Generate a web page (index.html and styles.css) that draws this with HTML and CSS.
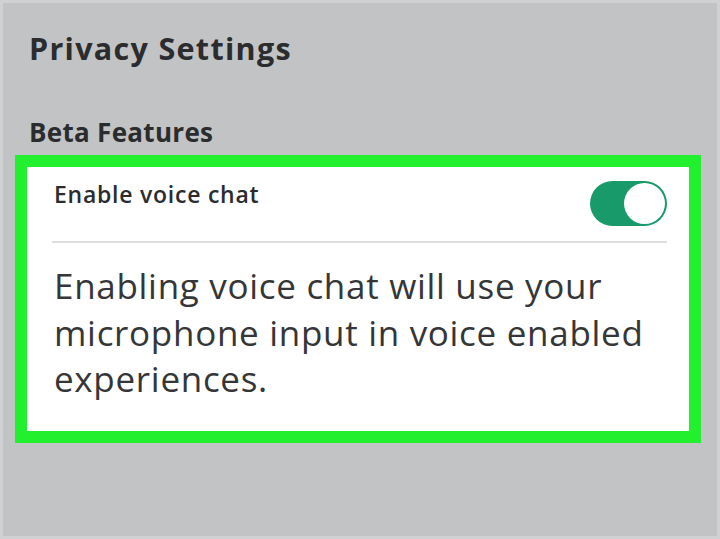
FILE: index.html
```html
<!DOCTYPE html>
<html>
<head>
<meta charset="utf-8">
<link rel="stylesheet" href="styles.css">
</head>
<body>
<div class="screen">
  <h1 class="title">Privacy Settings</h1>
  <h2 class="section">Beta Features</h2>
  <div class="highlight">
    <div class="card">
      <div class="row">
        <span class="label">Enable voice chat</span>
        <span class="toggle"><span class="knob"></span></span>
      </div>
      <div class="divider"></div>
      <p class="desc">Enabling voice chat will use your microphone input in voice enabled experiences.</p>
    </div>
  </div>
</div>
</body>
</html>
```
FILE: styles.css
```css
html, body {
  margin: 0;
  padding: 0;
}
body {
  width: 720px;
  height: 539px;
  overflow: hidden;
  background: #c2c3c5;
  font-family: "Open Sans", "Liberation Sans", sans-serif;
  color: #2b2c2e;
}
.screen {
  box-sizing: border-box;
  width: 720px;
  height: 539px;
  border: 3px solid #d0d1d3;
  padding: 25px 16px 0 12px;
}
.title {
  margin: 0 0 0 14px;
  font-size: 30.5px;
  font-weight: 700;
  line-height: 40px;
  letter-spacing: 1.3px;
}
.section {
  margin: 49px 0 0 14px;
  font-size: 26px;
  font-weight: 700;
  line-height: 30px;
  letter-spacing: 0.3px;
}
.highlight {
  margin-top: 8px;
  border: 12px solid #22f02e;
  background: #fff;
}
.card {
  padding: 12px 22px 28px 27px;
}
.row {
  display: flex;
  justify-content: space-between;
  align-items: flex-start;
}
.label {
  font-size: 23px;
  font-weight: 600;
  line-height: 30px;
  letter-spacing: 0.75px;
}
.toggle {
  box-sizing: border-box;
  width: 77px;
  height: 45px;
  border-radius: 23px;
  background: #189a6b;
  display: flex;
  justify-content: flex-end;
  align-items: center;
  padding: 2px;
  margin-top: 2px;
}
.knob {
  width: 41px;
  height: 41px;
  border-radius: 50%;
  background: #fff;
}
.divider {
  height: 2px;
  background: #dedede;
  margin: 15px 0 0 -2px;
}
.desc {
  margin: 20px 0 0 0;
  font-size: 35px;
  line-height: 46.5px;
  color: #353638;
  letter-spacing: 0.7px;
}
```
